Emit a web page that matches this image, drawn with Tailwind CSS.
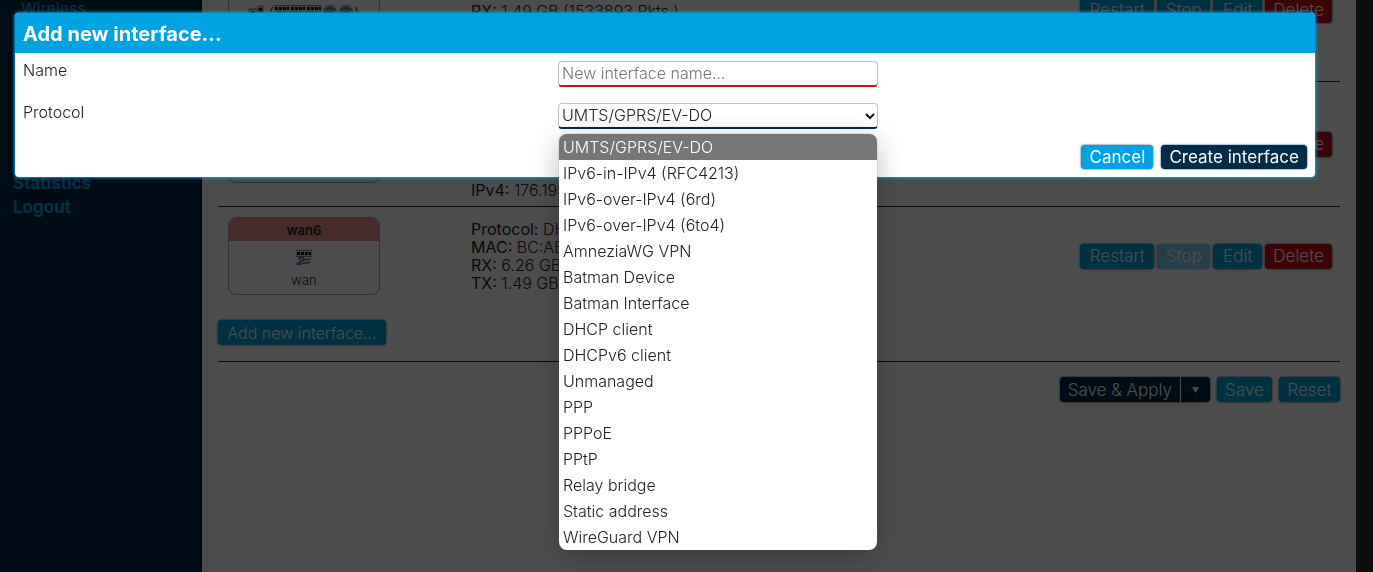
<!DOCTYPE html>
<html lang="en">
<head>
<meta charset="utf-8">
<meta name="viewport" content="width=device-width, initial-scale=1">
<title>Interfaces</title>
<script src="https://cdn.jsdelivr.net/npm/@tailwindcss/browser@4"></script>
</head>
<body class="h-screen overflow-hidden bg-white font-['Inter',sans-serif] text-[16px] leading-[18px] font-light text-[#212322]">
<svg class="hidden" aria-hidden="true">
  <symbol id="switch" viewBox="0 0 16 16">
    <path d="M0 1h16v6H0z" fill="#ddd"/><path d="M0 .5h16M0 6.5h16" stroke="#888"/>
    <path d="M1 2h3v3H1zM5 2h3v3H5zM9 2h3v3H9zM13 2h2v3h-2z" fill="#111"/>
    <path d="M1 5h1v1H1zM5 5h1v1H5zM9 5h1v1H9zM13 5h1v1h-1z" fill="#c8c060"/>
    <path d="M3 7h4l1 2-2 2H4z" fill="#bbb" stroke="#666"/>
    <path d="M14 9c-2 1-4 0-6 1s-5 2-7 4c3 1 5-1 8-1s3 0 5-1" fill="none" stroke="#527cb8" stroke-width="1.500"/>
  </symbol>
  <symbol id="port" viewBox="0 0 16 16">
    <path d="M1 4h8v8H1z" fill="#ccc" stroke="#777"/><path d="M3 6h4v4H3z" fill="#111"/>
    <path d="M10 1h5v9h-5z" fill="#ccc" stroke="#777"/><path d="M11 3h3v4h-3z" fill="#111"/>
  </symbol>
  <symbol id="wifi" viewBox="0 0 16 16">
    <circle cx="8" cy="7" r="6.500" fill="#88a4d4" stroke="#6c90cc"/><circle cx="8" cy="7" r="4" fill="none" stroke="#3868b0" stroke-width="1.500"/><circle cx="8" cy="7" r="1.500" fill="#222"/>
    <path d="M8 8v7" stroke="#666" stroke-width="1.500"/>
  </symbol>
</svg>

<div class="flex h-full overflow-hidden">
  <nav class="flex w-[202px] shrink-0 flex-col bg-[#002b49] pl-[13px] text-[17px] leading-6 font-bold text-[#00a3e1]">
    <a href="#" class="-mt-1 ml-2 text-[16px] font-normal">Wireless</a>
    <a href="#" class="mt-[151px]">Statistics</a>
    <a href="#">Logout</a>
  </nav>

  <main class="-mt-[61px] min-w-0 flex-1 px-4">
    <section class="flex h-[143px] items-center border-b border-[#002b49] pr-2 pl-[10px]">
      <div class="flex h-[78px] w-[152px] shrink-0 flex-col items-center overflow-hidden rounded-lg border border-gray-400">
        <div class="h-[23px] w-full bg-[#90f090]"></div>
        <div class="flex h-9 items-center">
          <svg class="size-4"><use href="#port"/></svg><span class="ml-1">(</span>
          <svg class="size-4"><use href="#switch"/></svg><svg class="size-4"><use href="#switch"/></svg><svg class="size-4"><use href="#switch"/></svg>
          <svg class="size-4"><use href="#wifi"/></svg><svg class="size-4"><use href="#wifi"/></svg><span>)</span>
        </div>
      </div>
      <div class="ml-[91px] flex-1 pt-[2px]"><b>RX:</b> 1.49 GB (1533893 Pkts.)</div>
      <div class="flex gap-[3px] text-[17px] text-white">
        <button class="h-[25px] min-w-[74px] rounded bg-[#00a3e1] px-2 shadow-[0_0_2px_#002b49]">Restart</button>
        <button class="h-[25px] min-w-[53px] rounded bg-[#00a3e1] px-2 shadow-[0_0_2px_#002b49]">Stop</button>
        <button class="h-[25px] min-w-[49px] rounded bg-[#00a3e1] px-2 shadow-[0_0_2px_#002b49]">Edit</button>
        <button class="h-[25px] min-w-[66px] rounded bg-[#ce0f1a] px-2 shadow-[0_0_2px_#002b49]">Delete</button>
      </div>
    </section>

    <section class="flex h-[125px] items-center border-b border-[#002b49] pr-2 pl-[10px]">
      <div class="h-[78px] w-[152px] shrink-0 rounded-lg border border-gray-400"></div>
      <div class="ml-[91px] flex-1 self-end pb-[7px]"><b>IPv4:</b> 176.195</div>
      <button class="h-[25px] min-w-[66px] rounded bg-[#ce0f1a] px-2 text-[17px] text-white shadow-[0_0_2px_#002b49]">Delete</button>
    </section>

    <section class="flex h-[98px] items-center pr-2 pl-[10px]">
      <div class="flex h-[78px] w-[152px] shrink-0 flex-col items-center overflow-hidden rounded-lg border border-gray-400 text-[13px]">
        <div class="flex h-[23px] w-full shrink-0 items-center justify-center bg-[#f09090] font-semibold">wan6</div>
        <div class="flex h-[34px] shrink-0 items-center"><svg class="size-4"><use href="#switch"/></svg></div>
        <div class="-mt-1">wan</div>
      </div>
      <div class="ml-[91px] flex-1">
        <div><b>Protocol:</b> DH</div>
        <div><b>MAC:</b> BC:AE</div>
        <div><b>RX:</b> 6.26 GB</div>
        <div><b>TX:</b> 1.49 GB</div>
      </div>
      <div class="flex gap-[3px] text-[17px] text-white">
        <button class="h-[25px] min-w-[74px] rounded bg-[#00a3e1] px-2 shadow-[0_0_2px_#002b49]">Restart</button>
        <button class="h-[25px] min-w-[53px] rounded bg-[#00a3e1] px-2 opacity-50 shadow-[0_0_2px_#002b49]" disabled>Stop</button>
        <button class="h-[25px] min-w-[49px] rounded bg-[#00a3e1] px-2 shadow-[0_0_2px_#002b49]">Edit</button>
        <button class="h-[25px] min-w-[66px] rounded bg-[#ce0f1a] px-2 shadow-[0_0_2px_#002b49]">Delete</button>
      </div>
    </section>

    <button class="mt-[15px] block h-[25px] min-w-[168px] rounded bg-[#00a3e1] px-2 text-white shadow-[0_0_2px_#002b49]">Add new interface...</button>

    <div class="mt-4 flex justify-end gap-[7px] border-t border-[#002b49] pt-[15px] text-[17px] text-white">
      <div class="flex h-[25px] rounded bg-[#002b49] shadow-[0_0_2px_#002b49]">
        <button class="px-2">Save &amp; Apply</button>
        <button class="flex w-[30px] items-center justify-center border-l border-white" aria-label="More apply options"><svg class="h-[6px] w-[7px]" viewBox="0 0 7 6"><path d="M0 0h7L3.500 6z" fill="#fff"/></svg></button>
      </div>
      <button class="h-[25px] min-w-[55px] rounded bg-[#00a3e1] px-2 shadow-[0_0_2px_#002b49]">Save</button>
      <button class="h-[25px] min-w-[61px] rounded bg-[#00a3e1] px-2 shadow-[0_0_2px_#002b49]">Reset</button>
    </div>
  </main>
  <div class="w-[17px] shrink-0 bg-[#303030]"></div>
</div>

<div class="fixed inset-0 bg-black/70 pt-[13px] pr-[58px] pl-[15px]">
  <div role="dialog" aria-labelledby="title" class="rounded bg-white shadow-[0_0_3px_1px_#00a3e1]">
    <h4 id="title" class="flex h-10 items-center rounded-t bg-[#00a3e1] px-2 pt-[2px] text-[20px] font-bold text-white">Add new interface...</h4>
    <form class="px-2 pt-2 pb-2">
      <div class="flex h-[42px] items-start">
        <label for="name" class="w-[535px] shrink-0">Name</label>
        <input id="name" placeholder="New interface name..." class="h-[26px] w-80 rounded border border-b-2 border-[#b8c4cc] border-b-[#ce0f1a] px-[3px] pb-[2px] font-light placeholder:text-[#757575]">
      </div>
      <div class="flex h-[42px] items-start">
        <label for="proto" class="w-[535px] shrink-0">Protocol</label>
        <div class="relative w-80">
          <select id="proto" class="block h-[26px] w-full appearance-none rounded border border-b-2 border-[#b8c4cc] border-b-[#002b49] bg-white px-[3px] pb-[2px] font-light"><option>UMTS/GPRS/EV-DO</option></select>
          <svg class="pointer-events-none absolute top-[10px] right-[3px] h-[7px] w-[10px]" viewBox="0 0 10 7" fill="none" stroke="#111" stroke-width="2"><path d="M1 1l4 4 4-4"/></svg>
          <ul role="listbox" class="absolute top-[31px] right-px left-px overflow-hidden rounded-lg bg-white leading-[26px] shadow-[0_0_1px_#555,0_6px_28px_rgba(0,0,0,0.25)]">
            <li role="option" aria-selected="true" class="bg-[#767676] px-1 text-white">UMTS/GPRS/EV-DO</li>
            <li role="option" class="px-1">IPv6-in-IPv4 (RFC4213)</li>
            <li role="option" class="px-1">IPv6-over-IPv4 (6rd)</li>
            <li role="option" class="px-1">IPv6-over-IPv4 (6to4)</li>
            <li role="option" class="px-1">AmneziaWG VPN</li>
            <li role="option" class="px-1">Batman Device</li>
            <li role="option" class="px-1">Batman Interface</li>
            <li role="option" class="px-1">DHCP client</li>
            <li role="option" class="px-1">DHCPv6 client</li>
            <li role="option" class="px-1">Unmanaged</li>
            <li role="option" class="px-1">PPP</li>
            <li role="option" class="px-1">PPPoE</li>
            <li role="option" class="px-1">PPtP</li>
            <li role="option" class="px-1">Relay bridge</li>
            <li role="option" class="px-1">Static address</li>
            <li role="option" class="px-1">WireGuard VPN</li>
          </ul>
        </div>
      </div>
      <div class="flex justify-end gap-2 text-[17px] font-normal text-white">
        <button type="button" class="h-6 min-w-[72px] rounded bg-[#00a3e1] px-2 shadow-[0_0_2px_#002b49]">Cancel</button>
        <button type="button" class="h-6 rounded bg-[#002b49] px-2 shadow-[0_0_2px_#002b49]">Create interface</button>
      </div>
    </form>
  </div>
</div>
</body>
</html>
